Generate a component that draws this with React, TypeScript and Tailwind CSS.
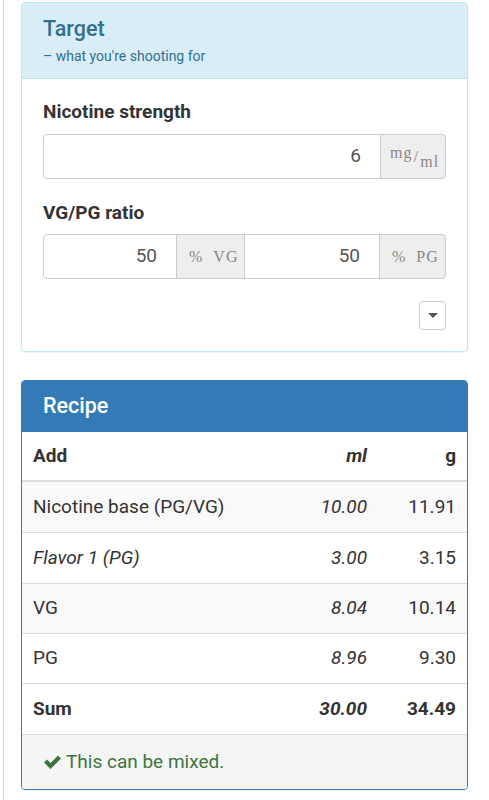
import React from 'react';

const rows = [
  { name: 'Nicotine base (PG/VG)', ml: '10.00', g: '11.91', italic: false, striped: true, h: 'h-[51px]' },
  { name: 'Flavor 1 (PG)', ml: '3.00', g: '3.15', italic: true, striped: false, h: 'h-[51px]' },
  { name: 'VG', ml: '8.04', g: '10.14', italic: false, striped: true, h: 'h-[50px]' },
  { name: 'PG', ml: '8.96', g: '9.30', italic: false, striped: false, h: 'h-[50px]' },
];

const Addon: React.FC<{ children: React.ReactNode; className?: string }> = ({ children, className }) => (
  <div
    className={`flex items-center bg-[#eee] text-[#888] font-['Liberation_Serif',serif] text-[16px] tracking-[1px] border border-[#ccc] ${className || ''}`}
  >
    {children}
  </div>
);

const App: React.FC = () => {
  return (
    <div className="min-h-[800px] bg-white pl-[3px] font-['Roboto',sans-serif]">
      <div className="min-h-[800px] border-l border-[#d6d6d6] pl-[17px] pr-[21px] pt-[2px]">
        {/* Target panel */}
        <div className="rounded-[4px] border border-[#bce8f1] shadow-[0_1px_1px_rgba(0,0,0,0.05)]">
          <div className="h-[76px] rounded-t-[3px] border-b border-[#bce8f1] bg-[#d9edf7] px-[21px] pt-[12px] text-[#31708f]">
            <div className="text-[21.5px] leading-[28px] font-medium">Target</div>
            <div className="mt-[3px] text-[14px] leading-[20px]">– what you're shooting for</div>
          </div>
          <div className="px-[21px] pt-[20px] pb-[21px]">
            <div className="text-[19px] leading-[26px] font-bold text-[#333]">Nicotine strength</div>
            <div className="mt-[9px] flex h-[45px]">
              <div className="flex flex-1 items-center justify-end rounded-l-[4px] border border-[#ccc] pr-[19px] text-[19px] text-[#555]">
                6
              </div>
              <Addon className="w-[66px] -ml-px rounded-r-[4px] pl-[9px] text-[14px] tracking-[0.5px]">
                <span className="-mt-[8px]">mg</span>
                <span className="mx-[1px] text-[17px]">/</span>
                <span className="mt-[10px]">ml</span>
              </Addon>
            </div>

            <div className="mt-[21px] text-[19px] leading-[26px] font-bold text-[#333]">VG/PG ratio</div>
            <div className="mt-[8px] flex h-[45px]">
              <div className="flex w-[134px] items-center justify-end rounded-l-[4px] border border-[#ccc] pr-[19px] text-[19px] text-[#555]">
                50
              </div>
              <Addon className="w-[69px] -ml-px pl-[12px]">%&nbsp;&nbsp;VG</Addon>
              <div className="-ml-px flex flex-1 items-center justify-end border border-[#ccc] pr-[19px] text-[19px] text-[#555]">
                50
              </div>
              <Addon className="w-[67px] -ml-px rounded-r-[4px] pl-[12px]">%&nbsp;&nbsp;PG</Addon>
            </div>

            <div className="mt-[22px] flex justify-end">
              <button className="flex h-[29px] w-[27px] items-center justify-center rounded-[4px] border border-[#ccc] bg-white">
                <svg width="10" height="6" viewBox="0 0 10 6">
                  <path d="M0 0 L10 0 L5 5 Z" fill="#555" />
                </svg>
              </button>
            </div>
          </div>
        </div>

        {/* Recipe panel */}
        <div className="mt-[28px] overflow-hidden rounded-[4px] border border-[#337ab7] shadow-[0_1px_1px_rgba(0,0,0,0.05)]">
          <div className="flex h-[51px] items-center bg-[#337ab7] px-[21px] text-[21.5px] font-medium text-white">
            Recipe
          </div>
          <div className="text-[19px] text-[#333]">
            <div className="grid h-[50px] grid-cols-[1fr_89px_89px] items-center border-b-2 border-[#ddd] bg-white font-bold">
              <div className="px-[11px]">Add</div>
              <div className="px-[11px] text-right italic">ml</div>
              <div className="px-[11px] text-right">g</div>
            </div>
            {rows.map((r) => (
              <div
                key={r.name}
                className={`grid ${r.h} grid-cols-[1fr_89px_89px] items-center border-b border-[#ddd] ${
                  r.striped ? 'bg-[#f9f9f9]' : 'bg-white'
                }`}
              >
                <div className={`px-[11px] ${r.italic ? 'italic' : ''}`}>{r.name}</div>
                <div className="px-[11px] text-right italic">{r.ml}</div>
                <div className="px-[11px] text-right">{r.g}</div>
              </div>
            ))}
            <div className="grid h-[50px] grid-cols-[1fr_89px_89px] items-center bg-white font-bold">
              <div className="px-[11px]">Sum</div>
              <div className="px-[11px] text-right italic">30.00</div>
              <div className="px-[11px] text-right">34.49</div>
            </div>
          </div>
          <div className="flex h-[55px] items-center gap-[4px] border-t border-[#ddd] bg-[#f5f5f5] px-[21px] text-[19px] text-[#3c763d]">
            <svg width="19" height="16" viewBox="0 0 19 16">
              <path d="M1 8.5 L4 5.5 L7.5 9 L15 1.5 L18 4.5 L7.5 15 Z" fill="#3c763d" />
            </svg>
            <span>This can be mixed.</span>
          </div>
        </div>
      </div>
    </div>
  );
};

export default App;
